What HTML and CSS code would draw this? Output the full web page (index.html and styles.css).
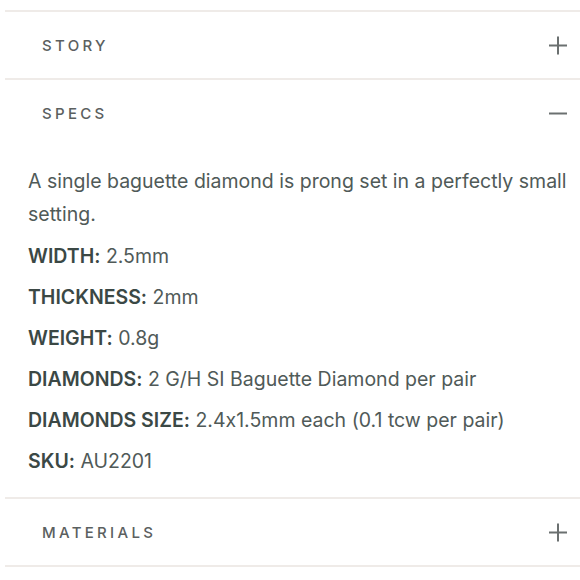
FILE: index.html
```html
<!DOCTYPE html>
<html>
<head>
<meta charset="utf-8">
<link rel="stylesheet" href="styles.css">
</head>
<body>
<div class="accordion">
  <section class="item">
    <div class="head">
      <span class="title">STORY</span>
      <svg class="icon" width="19" height="19" viewBox="0 0 19 19"><path d="M0 9.5H18M9 0.5V18.5" stroke="#6b7070" stroke-width="2"/></svg>
    </div>
  </section>
  <section class="item">
    <div class="head">
      <span class="title">SPECS</span>
      <svg class="icon" width="19" height="19" viewBox="0 0 19 19"><path d="M0 9.5H18" stroke="#6b7070" stroke-width="2"/></svg>
    </div>
    <div class="body">
      <p class="desc">A single baguette diamond is prong set in a perfectly small setting.</p>
      <p class="spec"><b>WIDTH:</b> 2.5mm</p>
      <p class="spec"><b>THICKNESS:</b> 2mm</p>
      <p class="spec"><b>WEIGHT:</b> 0.8g</p>
      <p class="spec"><b>DIAMONDS:</b> 2 G/H SI Baguette Diamond per pair</p>
      <p class="spec"><b>DIAMONDS SIZE:</b> 2.4x1.5mm each (0.1 tcw per pair)</p>
      <p class="spec"><b>SKU:</b> AU2201</p>
    </div>
  </section>
  <section class="item last">
    <div class="head">
      <span class="title">MATERIALS</span>
      <svg class="icon" width="19" height="19" viewBox="0 0 19 19"><path d="M0 9.5H18M9 0.5V18.5" stroke="#6b7070" stroke-width="2"/></svg>
    </div>
  </section>
</div>
</body>
</html>
```
FILE: styles.css
```css
html, body {
  margin: 0;
  padding: 0;
  background: #fff;
}
body {
  font-family: Inter, "Liberation Sans", sans-serif;
  font-feature-settings: "calt" 0;
  padding-top: 10px;
}
.accordion {
  margin-left: 5px;
}
.item {
  border-top: 2px solid #efebe8;
}
.item.last {
  border-bottom: 2px solid #efebe8;
}
.head {
  height: 66px;
  display: flex;
  align-items: center;
  justify-content: space-between;
  padding: 0 12px 0 37px;
}
.title {
  font-size: 15px;
  font-weight: 500;
  letter-spacing: 3.3px;
  color: #5b6060;
}
.icon {
  display: block;
}
.body {
  padding: 19px 0 15px 23px;
  color: #505a58;
  font-size: 19.5px;
}
.desc {
  margin: 0 0 5px;
  line-height: 33px;
  width: 550px;
}
.spec {
  margin: 0;
  line-height: 41px;
}
.spec b {
  font-weight: 600;
  color: #3b4845;
}
```
